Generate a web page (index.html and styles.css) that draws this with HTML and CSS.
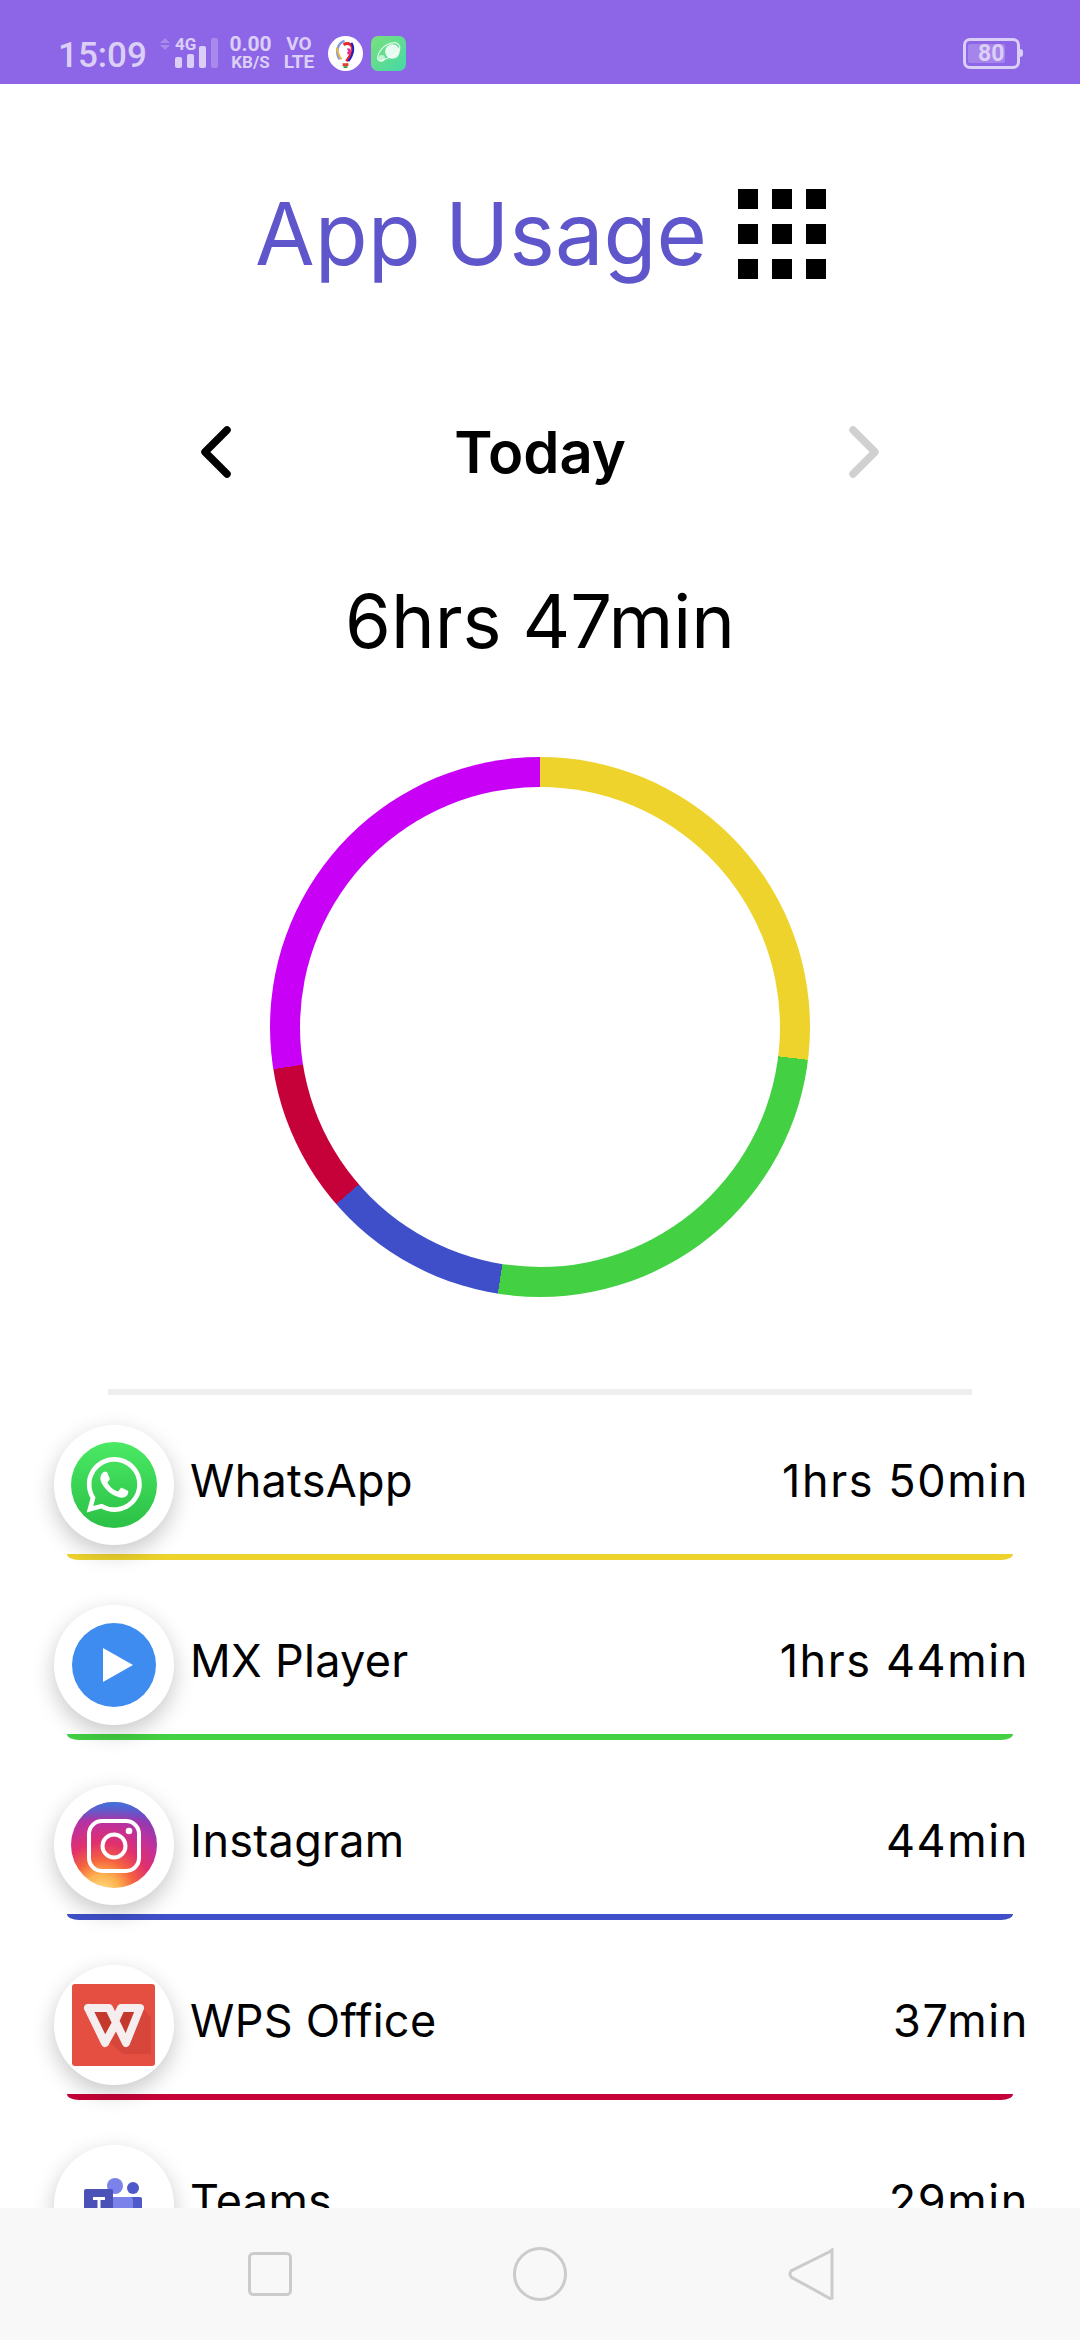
FILE: index.html
```html
<!DOCTYPE html>
<html lang="en">
<head>
    <meta charset="UTF-8">
    <meta name="viewport" content="width=device-width, initial-scale=1.0">
    <title>App Usage</title>
    <link rel="stylesheet" href="styles.css">
</head>
<body>
    <div class="phone">
        <div class="status-bar">
            <span class="clock">15:09</span>
            <svg class="net-arrows" width="10" height="12" viewBox="0 0 10 12"><path d="M5 0l5 5H0z" opacity=".35"/><path d="M5 12L0 7h10z" opacity=".35"/></svg>
            <div class="signal">
                <span class="signal-label">4G</span>
                <div class="signal-bars">
                    <span class="sig sig1"></span>
                    <span class="sig sig2"></span>
                    <span class="sig sig3"></span>
                    <span class="sig sig4"></span>
                </div>
            </div>
            <div class="stacked speed"><b>0.00</b><b class="small">KB/S</b></div>
            <div class="stacked volte"><b>VO</b><b>LTE</b></div>
            <svg class="notif" width="35" height="35" viewBox="0 0 36 36">
                <circle cx="18" cy="18" r="18" fill="#fff"/>
                <path d="M12 24C7 17 10 7 17 5" fill="none" stroke="#8b93dd" stroke-width="2.5"/>
                <path d="M9 12c1 5 2 9 5 12" fill="none" stroke="#e9b93c" stroke-width="2"/>
                <path d="M16 9c5-3 10 0 9 6-1 4-4 8-6 11" fill="none" stroke="#e8252c" stroke-width="3"/>
                <path d="M24 7c3 4 3 11-3 19" fill="none" stroke="#1e22c4" stroke-width="2"/>
                <path d="M20 14c3-1 3 3 0 4" fill="none" stroke="#d8279b" stroke-width="2.5"/>
                <rect x="15" y="28" width="6" height="3" fill="#e04038"/>
                <rect x="16" y="31" width="4" height="2" fill="#3a9a4a"/>
            </svg>
            <div class="notif-green">
                <svg width="35" height="35" viewBox="0 0 36 36">
                    <path d="M7 24C6 17 14 8 22 7c6-1 9 3 7 8-2 4-12 8-17 10-2 1-4 1-5-1z" fill="none" stroke="#fff" stroke-opacity=".8" stroke-width="1.2"/>
                    <circle cx="22" cy="16" r="7.5" fill="#fff" fill-opacity=".85"/>
                    <circle cx="11" cy="23" r="3.5" fill="#fff" fill-opacity=".6"/>
                </svg>
            </div>
            <div class="battery">
                <div class="battery-body"><span class="battery-level">80</span></div>
                <span class="battery-tip"></span>
            </div>
        </div>

        <div class="content">
            <div class="title-row">
                <h1>App Usage</h1>
                <div class="grid-icon">
                    <span></span><span></span><span></span>
                    <span></span><span></span><span></span>
                    <span></span><span></span><span></span>
                </div>
            </div>

            <div class="day-row">
                <svg width="30" height="52" viewBox="0 0 30 52"><path d="M26 4L4 26l22 22" class="chevron"/></svg>
                <span class="day">Today</span>
                <svg width="30" height="52" viewBox="0 0 30 52"><path d="M4 4l22 22L4 48" class="chevron chevron-off"/></svg>
            </div>

            <div class="total">6hrs 47min</div>

            <div class="donut"><div class="donut-hole"></div></div>

            <div class="divider"></div>

            <div class="app-row">
                <div class="app-line">
                    <div class="avatar">
                        <svg width="86" height="86" viewBox="0 0 86 86">
                            <defs><linearGradient id="wa" x1="0" y1="0" x2="0" y2="1"><stop offset="0" stop-color="#4ae964"/><stop offset="1" stop-color="#2bc046"/></linearGradient></defs>
                            <circle cx="43" cy="43" r="43" fill="url(#wa)"/>
                            <path transform="translate(15.5 15) scale(2.31)" fill="#fff" d="M17.472 14.382c-.297-.149-1.758-.867-2.03-.967-.273-.099-.471-.148-.67.15-.197.297-.767.966-.94 1.164-.173.199-.347.223-.644.075-.297-.15-1.255-.463-2.39-1.475-.883-.788-1.48-1.761-1.653-2.059-.173-.297-.018-.458.13-.606.134-.133.298-.347.446-.52.149-.174.198-.298.298-.497.099-.198.05-.371-.025-.52-.075-.149-.669-1.612-.916-2.207-.242-.579-.487-.5-.669-.51-.173-.008-.371-.01-.57-.01-.198 0-.52.074-.792.372-.272.297-1.04 1.016-1.04 2.479 0 1.462 1.065 2.875 1.213 3.074.149.198 2.096 3.2 5.077 4.487.709.306 1.262.489 1.694.625.712.227 1.36.195 1.871.118.571-.085 1.758-.719 2.006-1.413.248-.694.248-1.289.173-1.413-.074-.124-.272-.198-.57-.347m-5.421 7.403h-.004a9.87 9.87 0 01-5.031-1.378l-.361-.214-3.741.982.998-3.648-.235-.374a9.86 9.86 0 01-1.51-5.26c.001-5.45 4.436-9.884 9.888-9.884 2.64 0 5.122 1.03 6.988 2.898a9.825 9.825 0 012.893 6.994c-.003 5.45-4.437 9.884-9.885 9.884m8.413-18.297A11.815 11.815 0 0012.05 0C5.495 0 .16 5.335.157 11.892c0 2.096.547 4.142 1.588 5.945L.057 24l6.305-1.654a11.882 11.882 0 005.683 1.448h.005c6.554 0 11.89-5.335 11.893-11.893a11.821 11.821 0 00-3.48-8.413z"/>
                        </svg>
                    </div>
                    <span class="app-name">WhatsApp</span>
                    <span class="app-time">1hrs 50min</span>
                </div>
                <div class="app-bar bar-yellow"></div>
            </div>

            <div class="app-row">
                <div class="app-line">
                    <div class="avatar">
                        <svg width="86" height="86" viewBox="0 0 86 86">
                            <circle cx="43" cy="43" r="42" fill="#3f8cf0"/>
                            <path d="M32 26l30 17-30 17z" fill="#fff"/>
                        </svg>
                    </div>
                    <span class="app-name">MX Player</span>
                    <span class="app-time">1hrs 44min</span>
                </div>
                <div class="app-bar bar-green"></div>
            </div>

            <div class="app-row">
                <div class="app-line">
                    <div class="avatar">
                        <svg width="86" height="86" viewBox="0 0 86 86">
                            <defs>
                                <radialGradient id="ig1" cx=".36" cy="1.05" r="1.05">
                                    <stop offset="0" stop-color="#ffe08a"/>
                                    <stop offset=".2" stop-color="#fdb04e"/>
                                    <stop offset=".36" stop-color="#f5643f"/>
                                    <stop offset=".55" stop-color="#e1306c"/>
                                    <stop offset=".75" stop-color="#c1309a"/>
                                    <stop offset="1" stop-color="#7a3fc0"/>
                                </radialGradient>
                                <linearGradient id="ig2" x1="0" y1="0" x2="0" y2="1">
                                    <stop offset="0" stop-color="#3f74dc"/>
                                    <stop offset=".22" stop-color="#3f74dc" stop-opacity="0"/>
                                </linearGradient>
                            </defs>
                            <circle cx="43" cy="43" r="43" fill="url(#ig1)"/>
                            <circle cx="43" cy="43" r="43" fill="url(#ig2)"/>
                            <rect x="18" y="19" width="50" height="50" rx="13" fill="none" stroke="#fff" stroke-width="4"/>
                            <circle cx="43" cy="44" r="11.5" fill="none" stroke="#fff" stroke-width="4"/>
                            <circle cx="58" cy="29" r="3.3" fill="#fff"/>
                        </svg>
                    </div>
                    <span class="app-name">Instagram</span>
                    <span class="app-time">44min</span>
                </div>
                <div class="app-bar bar-blue"></div>
            </div>

            <div class="app-row">
                <div class="app-line">
                    <div class="avatar">
                        <svg width="86" height="86" viewBox="0 0 86 86">
                            <rect x="1" y="2" width="83" height="82" rx="3" fill="#e54f42"/>
                            <path d="M38 60L52 72H80V36L70 24z" fill="#d7463a"/>
                            <path d="M17 26H38L45 42 34 61z" fill="#c5392d"/>
                            <path d="M50 26H69L55 61 47 44z" fill="#c5392d"/>
                            <path d="M17 26H38L55 61 69 26H50L45 37M17 26L34 61 45 41" fill="none" stroke="#f6eeee" stroke-width="8" stroke-linejoin="round" stroke-linecap="round"/>
                        </svg>
                    </div>
                    <span class="app-name">WPS Office</span>
                    <span class="app-time">37min</span>
                </div>
                <div class="app-bar bar-red"></div>
            </div>

            <div class="app-row">
                <div class="app-line">
                    <div class="avatar">
                        <svg width="86" height="86" viewBox="0 0 86 86">
                            <circle cx="62" cy="26" r="6" fill="#5059c9"/>
                            <circle cx="44" cy="24" r="8" fill="#7b83eb"/>
                            <rect x="58" y="35" width="13" height="30" rx="2" fill="#5059c9"/>
                            <rect x="38" y="35" width="24" height="34" rx="3" fill="#7b83eb"/>
                            <rect x="13" y="27" width="29" height="36" rx="2" fill="#4a52b8"/>
                            <path d="M22 35h12v3h-4.500v18h-3V38H22z" fill="#fff"/>
                        </svg>
                    </div>
                    <span class="app-name">Teams</span>
                    <span class="app-time">29min</span>
                </div>
                <div class="app-bar bar-purple"></div>
            </div>
        </div>

        <div class="nav-bar">
            <svg width="44" height="44" viewBox="0 0 44 44"><rect x="1.5" y="1.5" width="41" height="41" rx="4" class="nav-stroke"/></svg>
            <svg width="54" height="54" viewBox="0 0 54 54"><circle cx="27" cy="27" r="25.5" class="nav-stroke"/></svg>
            <svg width="46" height="52" viewBox="0 0 46 52"><path d="M42 3.5L44 2v48l-2 .5L3 29q-2-3 0-6z" class="nav-stroke"/></svg>
        </div>
    </div>
</body>
</html>
```

FILE: styles.css
```css
* {
    box-sizing: border-box;
}
html, body {
    margin: 0;
    padding: 0;
    background-color: #fff;
}
body {
    font-family: Inter, "Noto Sans", sans-serif;
    color: #000;
}
.phone {
    width: 1080px;
    height: 2340px;
    display: flex;
    flex-direction: column;
    overflow: hidden;
}

/* status bar */
.status-bar {
    height: 84px;
    flex: none;
    background-color: #8c66e6;
    color: #dccff7;
    display: flex;
    align-items: center;
    padding: 22px 57px 0 58px;
    font-family: Roboto, sans-serif;
}
.clock {
    font-size: 35px;
    font-weight: 500;
    width: 102px;
    margin-top: 4px;
}
.net-arrows {
    fill: #dccff7;
    margin-right: 5px;
    margin-top: -18px;
}
.signal {
    position: relative;
    width: 43px;
    height: 30px;
    margin-right: 12px;
}
.signal-label {
    position: absolute;
    top: -2px;
    left: 0;
    font-size: 17px;
    line-height: 16px;
    font-weight: 700;
}
.signal-bars {
    height: 100%;
    display: flex;
    align-items: flex-end;
    gap: 5px;
}
.sig {
    width: 7px;
    background-color: #dccff7;
    border-radius: 2px;
}
.sig1 { height: 11px; }
.sig2 { height: 14px; }
.sig3 { height: 22px; }
.sig4 { height: 30px; opacity: .35; }
.stacked {
    display: flex;
    flex-direction: column;
    align-items: center;
    font-size: 19px;
    line-height: 18px;
}
.speed {
    width: 41px;
    margin-right: 12px;
}
.speed b:first-child {
    font-size: 21px;
}
.speed .small {
    font-size: 17px;
}
.volte {
    width: 32px;
    margin-right: 13px;
}
.notif {
    margin-right: 8px;
}
.notif-green {
    width: 35px;
    height: 35px;
    border-radius: 7px;
    background: linear-gradient(135deg, #7ae07c, #45d8a8);
}
.notif-green svg {
    display: block;
}
.battery {
    margin-left: auto;
    display: flex;
    align-items: center;
}
.battery-body {
    width: 57px;
    height: 31px;
    border: 3px solid #dccff7;
    border-radius: 7px;
    padding: 3px 12px 3px 2px;
    display: flex;
}
.battery-level {
    flex: 1;
    background-color: #a585ec;
    border-radius: 2px;
    font-size: 23px;
    font-weight: 700;
    line-height: 19px;
    white-space: nowrap;
    padding-left: 10px;
}
.battery-tip {
    width: 3px;
    height: 8px;
    background-color: #dccff7;
    border-radius: 0 3px 3px 0;
}

/* header */
.content {
    flex: 1;
    min-height: 0;
    overflow: hidden;
}
.title-row {
    display: flex;
    justify-content: center;
    align-items: center;
    height: 90px;
    margin-top: 105px;
    gap: 31px;
    padding-left: 1px;
}
h1 {
    margin: 0;
    font-size: 86.5px;
    font-weight: 400;
    color: #6056cc;
    line-height: 90px;
}
.grid-icon {
    width: 88px;
    height: 90px;
    display: grid;
    grid-template-columns: repeat(3, 20px);
    grid-template-rows: repeat(3, 20px);
    justify-content: space-between;
    align-content: space-between;
}
.grid-icon span {
    background-color: #000;
}
.day-row {
    display: flex;
    justify-content: space-between;
    align-items: center;
    padding: 0 201px;
    height: 52px;
    margin-top: 147px;
}
.day {
    font-size: 58px;
    font-weight: 600;
}
.chevron {
    fill: none;
    stroke: #000;
    stroke-width: 7.5;
    stroke-linecap: round;
    stroke-linejoin: round;
}
.chevron-off {
    stroke: #d0d0d0;
}
.total {
    text-align: center;
    font-size: 74px;
    line-height: 90px;
    margin-top: 98px;
}

/* chart */
.donut {
    width: 540px;
    height: 540px;
    margin: 91px auto 0;
    border-radius: 50%;
    background: conic-gradient(#edd32c 0 97deg, #43d043 97deg 189deg, #3f4fc9 189deg 229deg, #c60038 229deg 261deg, #c800f5 261deg 360deg);
    padding: 30px;
}
.donut-hole {
    width: 100%;
    height: 100%;
    border-radius: 50%;
    background-color: #fff;
}
.divider {
    height: 6px;
    background-color: #eee;
    margin: 92px 108px 30px;
}

/* app list */
.app-row {
    padding: 0 51px 0 54px;
    height: 180px;
}
.app-line {
    height: 120px;
    display: flex;
    align-items: center;
}
.avatar {
    width: 120px;
    height: 120px;
    flex: none;
    border-radius: 50%;
    background-color: #fff;
    box-shadow: 0 8px 22px rgba(0, 0, 0, .22);
    position: relative;
    z-index: 1;
    display: flex;
    align-items: center;
    justify-content: center;
    margin-right: 16px;
}
.app-name, .app-time {
    font-size: 45px;
    margin-top: -10px;
}
.app-name {
    letter-spacing: .3px;
}
.app-time {
    margin-left: auto;
    letter-spacing: 1.6px;
}
.app-bar {
    height: 6px;
    margin: 9px 16px 0 13px;
    border-radius: 0 0 12px 12px / 0 0 6px 6px;
}
.bar-yellow { background-color: #edd32c; }
.bar-green { background-color: #43d043; }
.bar-blue { background-color: #3f4fc9; }
.bar-red { background-color: #c60038; }
.bar-purple { background-color: #c800f5; }

/* nav bar */
.nav-bar {
    height: 132px;
    flex: none;
    background-color: #f8f8f8;
    display: flex;
    align-items: center;
    padding: 0 246px 0 248px;
    justify-content: space-between;
    position: relative;
    z-index: 2;
}
.nav-stroke {
    fill: none;
    stroke: #cbcbcb;
    stroke-width: 3;
}
```
